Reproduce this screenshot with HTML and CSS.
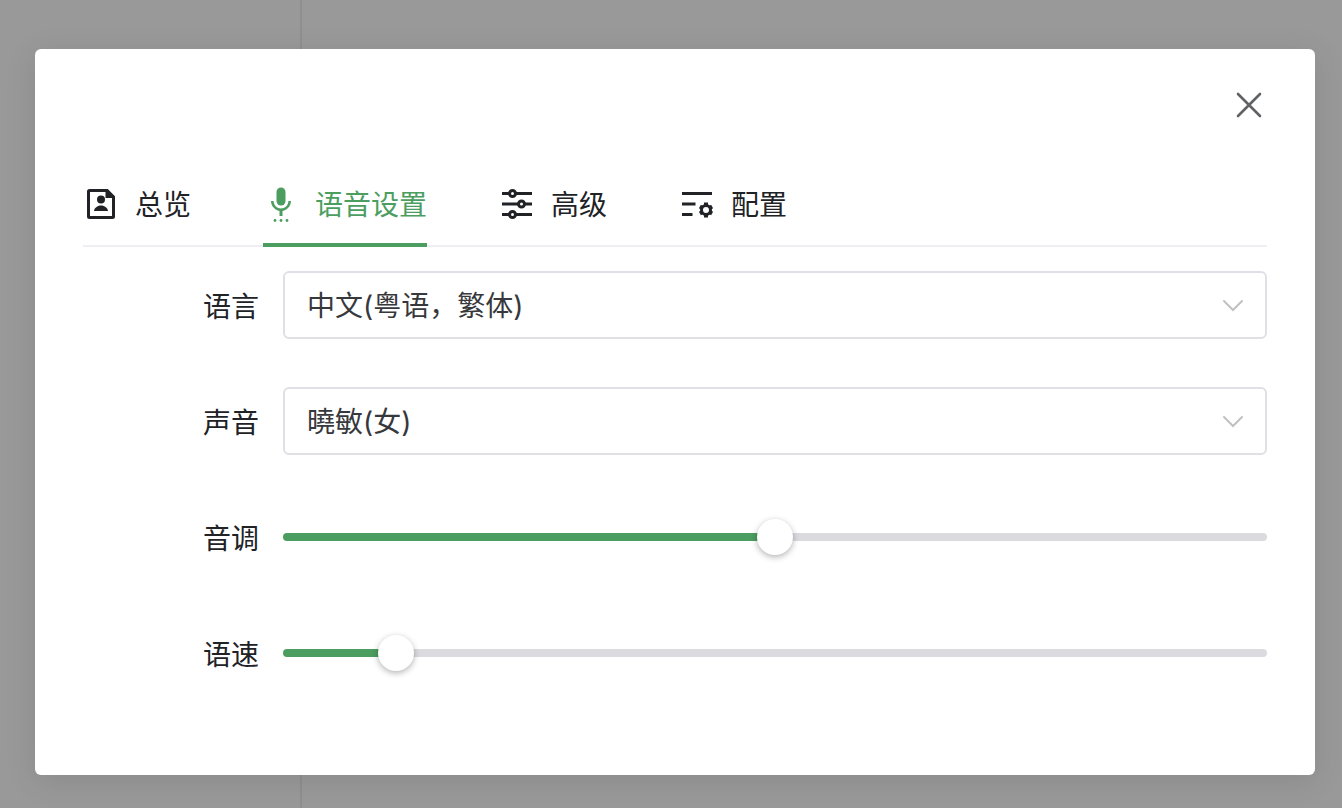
FILE: index.html
```html
<!DOCTYPE html>
<html lang="zh-CN">
<head>
<meta charset="utf-8">
<title>语音设置</title>
<link rel="stylesheet" href="styles.css">
</head>
<body>
<div class="sidebar"></div>
<main class="overlay">
  <section class="dialog" role="dialog" aria-label="语音设置">
    <header class="dialog-header">
      <button class="close" type="button" aria-label="关闭">
        <svg viewBox="0 0 36 40" width="36" height="40"><path d="M7 9l22 22M29 9L7 31"/></svg>
      </button>
    </header>
    <nav class="tabs" role="tablist">
      <button class="tab" type="button" role="tab">
        <svg class="icon" viewBox="0 0 36 36">
          <path class="line" d="M24 4.500H6.500a1 1 0 0 0-1 1v25a1 1 0 0 0 1 1h23a1 1 0 0 0 1-1V11z"/>
          <path d="M22.500 3h2L32 10.500V12h-9.500z"/>
          <circle cx="18" cy="13.500" r="4"/>
          <path d="M11 25c0-3 3.500-5.500 7-5.500s7 2.500 7 5.500z"/>
        </svg>
        <span>总览</span>
      </button>
      <button class="tab active" type="button" role="tab" aria-selected="true">
        <svg class="icon" viewBox="0 0 36 36">
          <rect x="13.500" y="1.500" width="9" height="18" rx="4.500"/>
          <path d="M8 15h2.600c0 4.500 3.600 7.500 7.400 7.500s7.400-3 7.400-7.500H28c0 5-3.900 9.300-8.500 9.900V30h-3v-5.100C11.900 24.300 8 20 8 15z"/>
          <circle cx="12" cy="34.500" r="1.400"/><circle cx="18" cy="34.500" r="1.400"/><circle cx="24" cy="34.500" r="1.400"/>
        </svg>
        <span>语音设置</span>
      </button>
      <button class="tab" type="button" role="tab">
        <svg class="icon" viewBox="0 0 36 36">
          <g class="line"><path d="M3 7.500h7.500M16.500 7.500H33M3 18h16.500M25.500 18H33M3 28.500h7.500M16.500 28.500H33"/>
          <circle cx="13.500" cy="7.500" r="3"/><circle cx="22.500" cy="18" r="3"/><circle cx="13.500" cy="28.500" r="3"/></g>
        </svg>
        <span>高级</span>
      </button>
      <button class="tab" type="button" role="tab">
        <svg class="icon" viewBox="0 0 36 36">
          <path class="line" d="M3 7.500h30M3 18h13.500M3 28.500h10.500"/>
          <circle class="line" cx="27" cy="24" r="4.500"/>
          <path class="teeth" d="M27 16.500V20M27 28v3.500M20.900 20.500l2.600 1.500M30.500 26l2.600 1.500M20.900 27.500l2.600-1.500M30.500 22l2.600-1.500"/>
        </svg>
        <span>配置</span>
      </button>
    </nav>
    <form class="form">
      <label for="language">语言</label>
      <div class="select">
        <select id="language"><option>中文(粤语，繁体)</option></select>
        <svg class="chevron" viewBox="0 0 24 24"><path d="M3 8L12 17 21 8"/></svg>
      </div>
      <label for="voice">声音</label>
      <div class="select">
        <select id="voice"><option>曉敏(女)</option></select>
        <svg class="chevron" viewBox="0 0 24 24"><path d="M3 8L12 17 21 8"/></svg>
      </div>
      <label for="pitch">音调</label>
      <input id="pitch" type="range" min="0" max="100" value="50" style="--value: 50%">
      <label for="rate">语速</label>
      <input id="rate" type="range" min="0" max="100" value="10" style="--value: 10%">
    </form>
  </section>
</main>
</body>
</html>
```
FILE: styles.css
```css
* {
  box-sizing: border-box;
}

body {
  margin: 0;
  min-height: 100vh;
  display: grid;
  grid-template-columns: 302px 1fr;
  background: #999;
  color: #202226;
  font-family: "Noto Sans CJK SC", sans-serif;
  font-size: 28px;
}

button, select {
  font: inherit;
  color: inherit;
}

.sidebar {
  grid-area: 1 / 1;
  border-right: 2px solid #8f8f8f;
}

.overlay {
  grid-area: 1 / 1 / 2 / 3;
  padding: 49px 27px 33px 35px;
}

.dialog {
  padding: 36px 48px 88px;
  background: #fff;
  border-radius: 6px;
  box-shadow: 0 6px 32px rgba(0, 0, 0, 0.1);
}

.dialog-header {
  display: flex;
  justify-content: flex-end;
}

.close {
  display: flex;
  padding: 0;
  border: 0;
  background: none;
}

.close path {
  fill: none;
  stroke: #606266;
  stroke-width: 2.6;
  stroke-linecap: round;
}

.tabs {
  display: flex;
  gap: 72px;
  margin-top: 40px;
  box-shadow: inset 0 -2px #eeeef3;
}

.tab {
  display: flex;
  align-items: center;
  gap: 16px;
  height: 82px;
  padding: 0 0 4px;
  border: 0;
  background: none;
  white-space: nowrap;
}

.tab span {
  padding-bottom: 3px;
}

.tab.active {
  color: #4b9e5f;
  box-shadow: inset 0 -4px #4b9e5f;
}

.icon {
  width: 36px;
  height: 36px;
  fill: currentColor;
}

.line,
.teeth {
  fill: none;
  stroke: currentColor;
  stroke-width: 3;
}

.teeth {
  stroke-width: 4;
}

.form {
  display: grid;
  grid-template-columns: 176px 1fr;
  grid-auto-rows: 68px;
  align-items: center;
  gap: 48px 24px;
  margin-top: 24px;
}

.form label {
  text-align: right;
}

.select {
  position: relative;
}

.select select {
  display: block;
  width: 100%;
  height: 68px;
  padding: 2px 64px 0 22px;
  border: 2px solid #dfe0e5;
  border-radius: 6px;
  background: #fff;
  color: #37383c;
  font-family: Inter, "Noto Sans CJK SC", sans-serif;
  appearance: none;
}

.chevron {
  position: absolute;
  top: 22px;
  right: 22px;
  width: 24px;
  height: 24px;
  fill: none;
  stroke: #c0c1c4;
  stroke-width: 2;
  stroke-linecap: round;
  pointer-events: none;
}

input[type="range"] {
  appearance: none;
  width: 100%;
  height: 36px;
  margin: 0;
  background: none;
}

input[type="range"]::-webkit-slider-runnable-track {
  height: 8px;
  border-radius: 4px;
  background: linear-gradient(to right, #4b9e5f var(--value), #dadadf var(--value));
}

input[type="range"]::-webkit-slider-thumb {
  appearance: none;
  width: 36px;
  height: 36px;
  margin-top: -14px;
  border-radius: 50%;
  background: #fff;
  box-shadow: 0 2px 6px rgba(0, 0, 0, 0.3);
}
```
